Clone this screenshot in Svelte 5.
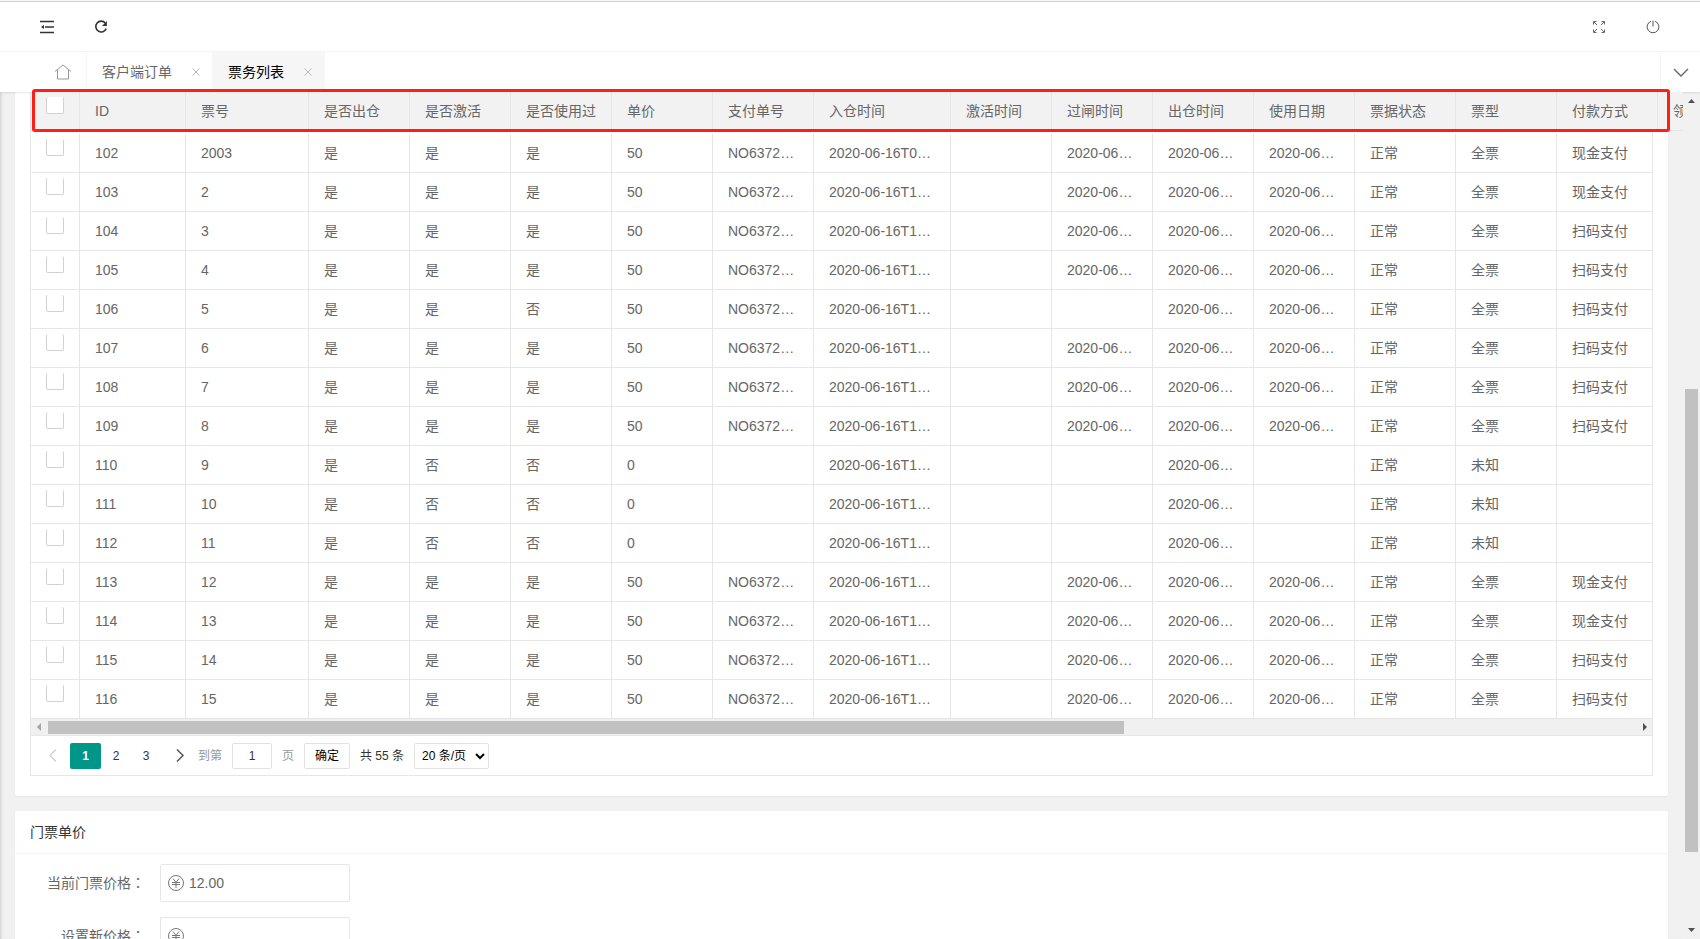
<script lang="ts">
	type Row = {
		id: number;
		no: number;
		activated: string;
		used: string;
		price: number;
		order: string;
		entered: string;
		gate: string;
		left: string;
		usedOn: string;
		type: string;
		pay: string;
	};

	const columns = [
		{ title: 'ID', width: 106 },
		{ title: '票号', width: 123 },
		{ title: '是否出仓', width: 101 },
		{ title: '是否激活', width: 101 },
		{ title: '是否使用过', width: 101 },
		{ title: '单价', width: 101 },
		{ title: '支付单号', width: 101 },
		{ title: '入仓时间', width: 137 },
		{ title: '激活时间', width: 101 },
		{ title: '过闸时间', width: 101 },
		{ title: '出仓时间', width: 101 },
		{ title: '使用日期', width: 101 },
		{ title: '票据状态', width: 101 },
		{ title: '票型', width: 101 },
		{ title: '付款方式', width: 101 },
		{ title: '领', width: 101 }
	];

	const date = '2020-06-16';
	const cash = [102, 103, 113, 114];
	const unpaid = [110, 111, 112];

	function makeRow(i: number): Row {
		const id = 102 + i;
		const paid = !unpaid.includes(id);
		const through = paid && id !== 106;
		return {
			id,
			no: i === 0 ? 2003 : i + 1,
			activated: paid ? '是' : '否',
			used: through ? '是' : '否',
			price: paid ? 50 : 0,
			order: paid ? 'NO6372791' : '',
			entered: date + (i === 0 ? 'T09:20' : 'T10:20'),
			gate: through ? date : '',
			left: date,
			usedOn: paid ? date : '',
			type: paid ? '全票' : '未知',
			pay: !paid ? '' : cash.includes(id) ? '现金支付' : '扫码支付'
		};
	}

	const rows = Array.from({ length: 15 }, (_, i) => makeRow(i));

	function cells(r: Row) {
		return [r.id, r.no, '是', r.activated, r.used, r.price, r.order, r.entered, '', r.gate, r.left, r.usedOn, '正常', r.type, r.pay, ''];
	}

	const prices = [
		{ id: 'current', label: '当前门票价格：', value: '12.00' },
		{ id: 'next', label: '设置新价格：', value: '' }
	];
</script>

{#snippet cols()}
	<colgroup>
		<col style="width: 49px" />
		{#each columns as c}
			<col style="width: {c.width}px" />
		{/each}
	</colgroup>
{/snippet}

<div class="app">
	<header class="topbar">
		<button class="icon" aria-label="侧边伸缩">
			<svg width="14" height="14" viewBox="0 0 14 14" stroke="#333" stroke-width="1.3" fill="none">
				<path d="M0 1.5h14M5 7h9M0 12.5h14" />
				<path d="M4 5v4L1 7z" fill="#333" stroke="none" />
			</svg>
		</button>
		<button class="icon" aria-label="刷新">
			<svg width="14" height="14" viewBox="0 0 14 14" stroke="#333" stroke-width="1.6" fill="none">
				<path d="M11.3 3A5.4 5.4 0 1 0 12.2 8.6" />
				<path d="M12.9 1v5H8z" fill="#333" stroke="none" />
			</svg>
		</button>
		<span class="spacer"></span>
		<button class="icon" aria-label="全屏">
			<svg width="12" height="12" viewBox="0 0 12 12" stroke="#666" fill="none">
				<path d="M.5 3.5v-3h3M1 1l3 3M8.5.5h3v3M11 1L8 4M.5 8.5v3h3M1 11l3-3M8.5 11.5h3v-3M11 11L8 8" />
			</svg>
		</button>
		<button class="icon" aria-label="退出">
			<svg width="14" height="14" viewBox="0 0 14 14" stroke="#555" fill="none">
				<path d="M5 1.3A5.9 5.9 0 1 0 9 1.3M7 .5v6" />
			</svg>
		</button>
	</header>

	<nav class="tabs">
		<a class="home" href="#home" aria-label="首页">
			<svg width="18" height="16" viewBox="0 0 18 16" stroke="#999" fill="none">
				<path d="M1 7.5L9 1l8 6.5M3.5 6v9h11V6" />
			</svg>
		</a>
		<div class="tab">
			<a href="#orders">客户端订单</a>
			<button class="close" aria-label="关闭"><svg width="8" height="8" viewBox="0 0 8 8"><path d="M.5.5l7 7M7.5.5l-7 7" /></svg></button>
		</div>
		<div class="tab active">
			<a href="#tickets">票务列表</a>
			<button class="close" aria-label="关闭"><svg width="8" height="8" viewBox="0 0 8 8"><path d="M.5.5l7 7M7.5.5l-7 7" /></svg></button>
		</div>
		<span class="spacer"></span>
		<button class="more" aria-label="更多">
			<svg width="16" height="9" viewBox="0 0 16 9" stroke="#666" stroke-width="1.4" fill="none"><path d="M1 1l7 7 7-7" /></svg>
		</button>
	</nav>

	<div class="body">
		<main>
			<section class="card list">
				<div class="grid">
					<div class="pinned">
						<div class="clip">
							<table>
								{@render cols()}
								<thead>
									<tr>
										<th class="check"><input type="checkbox" aria-label="全选" /></th>
										{#each columns as c}
											<th>{c.title}</th>
										{/each}
									</tr>
								</thead>
							</table>
						</div>
						<div class="highlight"></div>
					</div>
					<div class="clip rows">
						<table>
							{@render cols()}
							<tbody>
								{#each rows as r}
									<tr>
										<td class="check"><input type="checkbox" aria-label="选择 {r.id}" /></td>
										{#each cells(r) as cell}
											<td>{cell}</td>
										{/each}
									</tr>
								{/each}
							</tbody>
						</table>
					</div>
					<div class="hscroll">
						<svg width="17" height="16" viewBox="0 0 17 16"><path d="M10 4v8L6 8z" fill="#a3a3a3" /></svg>
						<div class="track"><div class="thumb"></div></div>
						<svg width="17" height="16" viewBox="0 0 17 16"><path d="M8 4v8l4-4z" fill="#505050" /></svg>
					</div>
					<div class="pager">
						<button class="page prev" aria-label="上一页">
							<svg width="8" height="13" viewBox="0 0 8 13"><path d="M7 .5l-6 6 6 6" /></svg>
						</button>
						<button class="page current">1</button>
						<button class="page">2</button>
						<button class="page">3</button>
						<button class="page next" aria-label="下一页">
							<svg width="8" height="13" viewBox="0 0 8 13"><path d="M1 .5l6 6-6 6" /></svg>
						</button>
						<label class="skip">到第 <input type="text" value="1" /> 页</label>
						<button class="confirm">确定</button>
						<span class="count">共 55 条</span>
						<select aria-label="每页条数"><option>20 条/页</option></select>
					</div>
				</div>
			</section>

			<section class="card">
				<h2>门票单价</h2>
				<form>
					{#each prices as p}
						<div class="field">
							<label for={p.id}>{p.label}</label>
							<div class="money">
								<svg width="16" height="16" viewBox="0 0 16 16" stroke="#777" fill="none">
									<circle cx="8" cy="8" r="7.5" />
									<path d="M5 3.5l3 4 3-4M4 7.5h8M4 9.5h8M8 7.5V13" />
								</svg>
								<input id={p.id} type="text" value={p.value} />
							</div>
						</div>
					{/each}
				</form>
			</section>
		</main>

		<div class="vscroll">
			<svg width="17" height="17" viewBox="0 0 17 17"><path d="M5 11h7L8.5 7z" fill="#505050" /></svg>
			<div class="vtrack"><div class="vthumb"></div></div>
			<svg width="17" height="17" viewBox="0 0 17 17"><path d="M5 6h7l-3.5 4z" fill="#505050" /></svg>
		</div>
	</div>
</div>

<style>
	:global(body) {
		margin: 0;
		overflow: hidden;
	}
	.app {
		display: flex;
		flex-direction: column;
		box-sizing: border-box;
		height: 100vh;
		border-top: 1px solid #f7f7f7;
		background: #f1f1f1;
		box-shadow: inset 3px 0 3px -2px #ccc;
		color: #666;
		font: 14px/24px 'Liberation Sans', 'Noto Sans CJK SC', sans-serif;
	}
	button,
	input,
	select {
		box-sizing: border-box;
		margin: 0;
		padding: 0;
		border: none;
		background: none;
		color: inherit;
		font: inherit;
	}
	a {
		color: inherit;
		text-decoration: none;
	}
	svg {
		display: block;
		flex: none;
	}
	.spacer {
		flex: 1;
	}

	.topbar {
		display: flex;
		flex: none;
		height: 49px;
		padding: 0 20px;
		border-top: 1px solid #d2d2d2;
		border-bottom: 1px solid #f6f6f6;
		background: #fff;
	}
	.icon {
		display: grid;
		place-items: center;
		width: 54px;
	}

	.tabs {
		position: relative;
		z-index: 1;
		display: flex;
		flex: none;
		height: 40px;
		background: #fff;
		box-shadow: 0 1px 2px rgba(0, 0, 0, 0.1);
	}
	.home {
		display: grid;
		place-items: center;
		width: 46px;
		padding-left: 40px;
		border-right: 1px solid #f6f6f6;
	}
	.tab {
		display: flex;
		align-items: center;
		gap: 20px;
		padding: 0 12px 0 15px;
	}
	.tab.active {
		border: solid #f6f6f6;
		border-width: 0 1px;
		background: #f6f6f6;
		color: #000;
	}
	.close {
		display: grid;
		place-items: center;
		width: 8px;
		height: 16px;
	}
	.close path {
		stroke: #bbb;
	}
	.more {
		display: grid;
		place-items: center;
		width: 40px;
		border-left: 1px solid #f6f6f6;
	}

	.body {
		display: grid;
		grid-template-columns: minmax(0, 1fr) 17px;
		flex: 1;
		min-height: 0;
	}
	main {
		display: flex;
		flex-direction: column;
		gap: 15px;
		min-height: 0;
		padding: 0 15px;
	}
	.card {
		flex: none;
		border-radius: 2px;
		background: #fff;
		box-shadow: 0 1px 2px rgba(0, 0, 0, 0.05);
	}
	.list {
		padding: 0 15px 20px;
	}
	.grid {
		border: 1px solid #e6e6e6;
		border-top: none;
	}
	.pinned {
		position: relative;
		z-index: 2;
		height: 39px;
		/* the floating header runs past the card up to the scrollbar */
		margin-right: -31px;
	}
	.clip {
		overflow: hidden;
	}
	.rows {
		border-top: 3px solid #fff;
	}
	table {
		width: 0;
		table-layout: fixed;
		border-collapse: separate;
		border-spacing: 0;
	}
	th,
	td {
		box-sizing: border-box;
		height: 39px;
		padding: 0 15px;
		overflow: hidden;
		border: solid #e6e6e6;
		border-width: 0 1px 1px 0;
		font-weight: 400;
		text-align: left;
		text-overflow: ellipsis;
		white-space: nowrap;
	}
	th {
		background: #f2f2f2;
	}
	.check {
		padding-bottom: 12px;
	}
	.check input {
		display: block;
		appearance: none;
		width: 18px;
		height: 17px;
		border: solid #d2d2d2;
		border-width: 0 1px 1px;
		border-radius: 2px;
		background: #fff;
	}
	.highlight {
		position: absolute;
		inset: -3px 13px -1px 1px;
		border: 3px solid #ff1f14;
		border-radius: 3px;
		pointer-events: none;
	}

	.hscroll {
		display: flex;
		height: 16px;
		border-bottom: 1px solid #e6e6e6;
		background: #f0f0f0;
	}
	.track {
		flex: 1;
		padding: 2px 0 1px;
	}
	.thumb {
		width: 67.8%;
		height: 100%;
		background: #c1c1c1;
	}

	.pager {
		display: flex;
		align-items: center;
		height: 39px;
		padding-left: 4px;
		color: #333;
		font-size: 12px;
	}
	.page {
		display: grid;
		place-items: center;
		width: 30px;
		height: 26px;
	}
	.page path {
		fill: none;
		stroke: #555;
		stroke-width: 1.5;
	}
	.page.prev {
		width: 35px;
	}
	.page.prev path {
		stroke: #d2d2d2;
	}
	.page.current {
		width: 31px;
		border-radius: 2px;
		background: #009688;
		color: #fff;
		font-weight: 700;
	}
	.page.next {
		width: 37px;
	}
	.skip {
		display: flex;
		align-items: center;
		gap: 10px;
		color: #999;
	}
	.skip input {
		width: 40px;
		height: 26px;
		border: 1px solid #e2e2e2;
		border-radius: 2px;
		color: #333;
		text-align: center;
	}
	.confirm {
		width: 46px;
		height: 26px;
		margin: 0 10px;
		border: 1px solid #e2e2e2;
		border-radius: 2px;
		color: #000;
	}
	select {
		width: 75px;
		height: 26px;
		margin-left: 10px;
		padding: 0 3px;
		border: 1px solid #e2e2e2;
		border-radius: 2px;
		background: #fff;
		color: #000;
	}

	h2 {
		margin: 0;
		padding: 0 15px;
		border-bottom: 1px solid #f6f6f6;
		color: #333;
		font-size: 14px;
		font-weight: 400;
		line-height: 42px;
	}
	form {
		display: flex;
		flex-direction: column;
		gap: 15px;
		padding: 10px 15px;
	}
	.field {
		display: flex;
		align-items: center;
	}
	.field label {
		width: 115px;
		padding-right: 15px;
		font-family: 'Liberation Sans', 'Noto Sans CJK TC', sans-serif;
		text-align: right;
	}
	.money {
		display: flex;
		align-items: center;
		gap: 5px;
		box-sizing: border-box;
		width: 190px;
		height: 38px;
		padding: 0 7px;
		border: 1px solid #e6e6e6;
		border-radius: 2px;
	}
	.money input {
		flex: 1;
		min-width: 0;
	}

	.vscroll {
		display: flex;
		flex-direction: column;
		background: #f1f1f1;
	}
	.vtrack {
		display: flex;
		flex: 1;
		flex-direction: column;
		padding: 0 2px;
	}
	.vthumb {
		height: 57%;
		margin-top: 280px;
		background: #c1c1c1;
	}
</style>
